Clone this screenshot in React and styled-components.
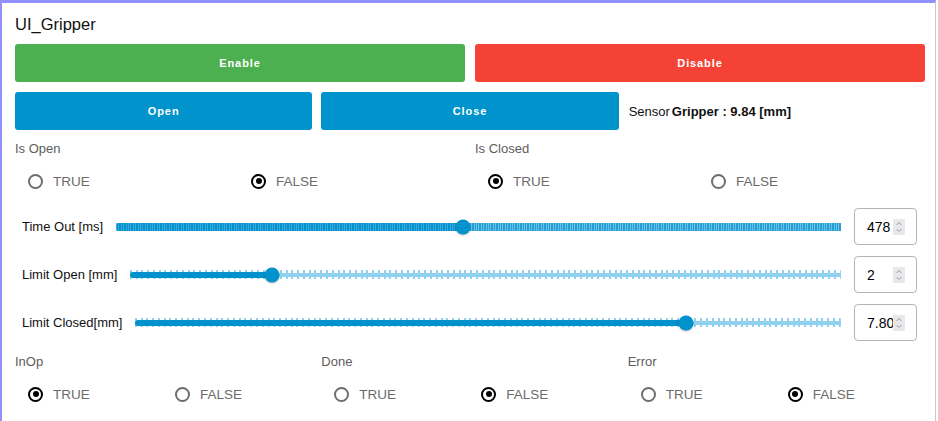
import styled, { createGlobalStyle } from "styled-components"

const GlobalStyle = createGlobalStyle`
  html, body {
    margin: 0;
    padding: 0;
    background: #ffffff;
    font-family: "Liberation Sans", Arial, sans-serif;
  }
`

const sliders = [
  { label: "Time Out [ms]", value: 0.478, display: "478", step: 2.4, dense: true },
  { label: "Limit Open [mm]", value: 0.2, display: "2", step: 5.77 },
  { label: "Limit Closed[mm]", value: 0.78, display: "7.80", step: 5.77 },
]

function Radio({ label, checked }) {
  return (
    <Option>
      <Circle $checked={checked} />
      <span>{label}</span>
    </Option>
  )
}

function Group({ title, value, optionWidth }) {
  return (
    <GroupBox>
      <GroupTitle>{title}</GroupTitle>
      <Options $w={optionWidth}>
        <Radio label="TRUE" checked={value} />
        <Radio label="FALSE" checked={!value} />
      </Options>
    </GroupBox>
  )
}

function Slider({ value, step, dense }) {
  return (
    <Track>
      <Rail $step={step} $dense={dense} />
      <Fill style={{ width: `${value * 100}%` }} $dense={dense} $step={step} />
      <Thumb style={{ left: `${value * 100}%` }} />
    </Track>
  )
}

export default function App() {
  return (
    <Frame>
      <GlobalStyle />
      <Title>UI_Gripper</Title>
      <TwoCols>
        <Button $color="#4caf50">Enable</Button>
        <Button $color="#f44336">Disable</Button>
      </TwoCols>
      <ThreeCols>
        <Button $color="#0093cc">Open</Button>
        <Button $color="#0093cc">Close</Button>
        <Sensor>
          Sensor<b>Gripper : 9.84 [mm]</b>
        </Sensor>
      </ThreeCols>
      <TwoCols>
        <Group title="Is Open" value={false} optionWidth={223} />
        <Group title="Is Closed" value={true} optionWidth={223} />
      </TwoCols>
      <SliderList>
        {sliders.map((s) => (
          <SliderRow key={s.label}>
            <SliderLabel>{s.label}</SliderLabel>
            <Slider value={s.value} step={s.step} dense={s.dense} />
            <NumberBox>
              <span>{s.display}</span>
              <Spin>
                <svg width="8" height="14" viewBox="0 0 8 14">
                  <path d="M1.5 5 L4 2.5 L6.5 5" fill="none" stroke="#9a9a9a" strokeWidth="1" />
                  <path d="M1.5 9 L4 11.5 L6.5 9" fill="none" stroke="#9a9a9a" strokeWidth="1" />
                </svg>
              </Spin>
            </NumberBox>
          </SliderRow>
        ))}
      </SliderList>
      <ThreeCols>
        <Group title="InOp" value={true} optionWidth={147} />
        <Group title="Done" value={false} optionWidth={147} />
        <Group title="Error" value={false} optionWidth={147} />
      </ThreeCols>
    </Frame>
  )
}

const Frame = styled.div`
  box-sizing: border-box;
  width: 936px;
  height: 421px;
  overflow: hidden;
  border-top: 3px solid #9390ff;
  border-left: 2px solid #9390ff;
  border-right: 1px solid #c8c8c8;
  padding: 10px 10px 0 13px;
  display: flex;
  flex-direction: column;
`
const Title = styled.div`
  font-size: 16.5px;
  color: #111;
  height: 22px;
  line-height: 22px;
  margin-bottom: 9px;
`
const TwoCols = styled.div`
  display: grid;
  grid-template-columns: minmax(0, 1fr) minmax(0, 1fr);
  gap: 10px;
  margin-bottom: 10px;
`
const ThreeCols = styled.div`
  display: grid;
  grid-template-columns: minmax(0, 1fr) minmax(0, 1fr) minmax(0, 1fr);
  gap: 9px;
  margin-bottom: 10px;
`
const Button = styled.div`
  height: 38px;
  border-radius: 3px;
  background: ${(p) => p.$color};
  color: #fff;
  font-size: 11px;
  font-weight: bold;
  letter-spacing: 0.9px;
  display: flex;
  align-items: center;
  justify-content: center;
`
const Sensor = styled.div`
  display: flex;
  align-items: center;
  font-size: 13px;
  color: #111;
  padding-left: 1px;
  b {
    margin-left: 2px;
  }
`
const GroupBox = styled.div`
  display: flex;
  flex-direction: column;
  min-width: 0;
`
const GroupTitle = styled.div`
  font-size: 13px;
  color: #5c5c5c;
  height: 18px;
  line-height: 18px;
`
const Options = styled.div`
  display: grid;
  grid-template-columns: ${(p) => `${p.$w}px ${p.$w}px`};
  padding-left: 13px;
  height: 30px;
  margin-top: 8px;
`
const Option = styled.div`
  display: flex;
  align-items: center;
  gap: 10px;
  font-size: 13.5px;
  color: #6b6b6b;
`
const Circle = styled.span`
  box-sizing: border-box;
  width: 15px;
  height: 15px;
  border-radius: 50%;
  border: 2px solid ${(p) => (p.$checked ? "#000" : "#6e6e6e")};
  position: relative;
  flex-shrink: 0;
  &::after {
    content: "";
    display: ${(p) => (p.$checked ? "block" : "none")};
    position: absolute;
    left: 2.5px;
    top: 2.5px;
    width: 6px;
    height: 6px;
    border-radius: 50%;
    background: #000;
  }
`
const SliderList = styled.div`
  display: flex;
  flex-direction: column;
  gap: 11px;
  padding: 2px 8px 0 7px;
  margin-bottom: 12px;
`
const SliderRow = styled.div`
  display: flex;
  align-items: center;
  height: 37px;
  gap: 13px;
`
const SliderLabel = styled.div`
  font-size: 13px;
  color: #111;
  white-space: nowrap;
`
const Track = styled.div`
  flex: 1;
  position: relative;
  height: 10px;
`
const Rail = styled.div`
  position: absolute;
  inset: 0;
  background:
    ${(p) =>
      p.$dense
        ? `repeating-linear-gradient(90deg, #6cc0e6 0 1px, #249fd6 1px ${p.$step}px)`
        : `repeating-linear-gradient(90deg, #8fd1ee 0 2px, transparent 2px ${p.$step}px)`},
    linear-gradient(#8fd1ee, #8fd1ee);
  background-size: ${(p) => (p.$dense ? "100% 8px, 100% 8px" : "100% 9px, 100% 4px")};
  background-position: center, center;
  background-repeat: no-repeat;
`
const Fill = styled.div`
  position: absolute;
  left: 0;
  top: 50%;
  transform: translateY(-50%);
  height: ${(p) => (p.$dense ? "8px" : "6px")};
  background: ${(p) =>
    p.$dense
      ? `repeating-linear-gradient(90deg, #3aa8db 0 1px, #0092cc 1px ${p.$step}px)`
      : "#0092cc"};
  border-radius: 3px 0 0 3px;
`
const Thumb = styled.div`
  position: absolute;
  top: 50%;
  width: 15px;
  height: 15px;
  border-radius: 50%;
  background: #0092cc;
  transform: translate(-50%, -50%);
  box-shadow: 0 1px 2px rgba(0, 0, 0, 0.25);
`
const NumberBox = styled.div`
  box-sizing: border-box;
  width: 63px;
  height: 37px;
  border: 1px solid #b4b4b4;
  border-radius: 4px;
  display: flex;
  align-items: center;
  padding-left: 12px;
  font-size: 14px;
  color: #000;
  span {
    width: 26px;
  }
`
const Spin = styled.div`
  width: 12px;
  height: 16px;
  background: #e8e8ec;
  display: flex;
  align-items: center;
  justify-content: center;
`
